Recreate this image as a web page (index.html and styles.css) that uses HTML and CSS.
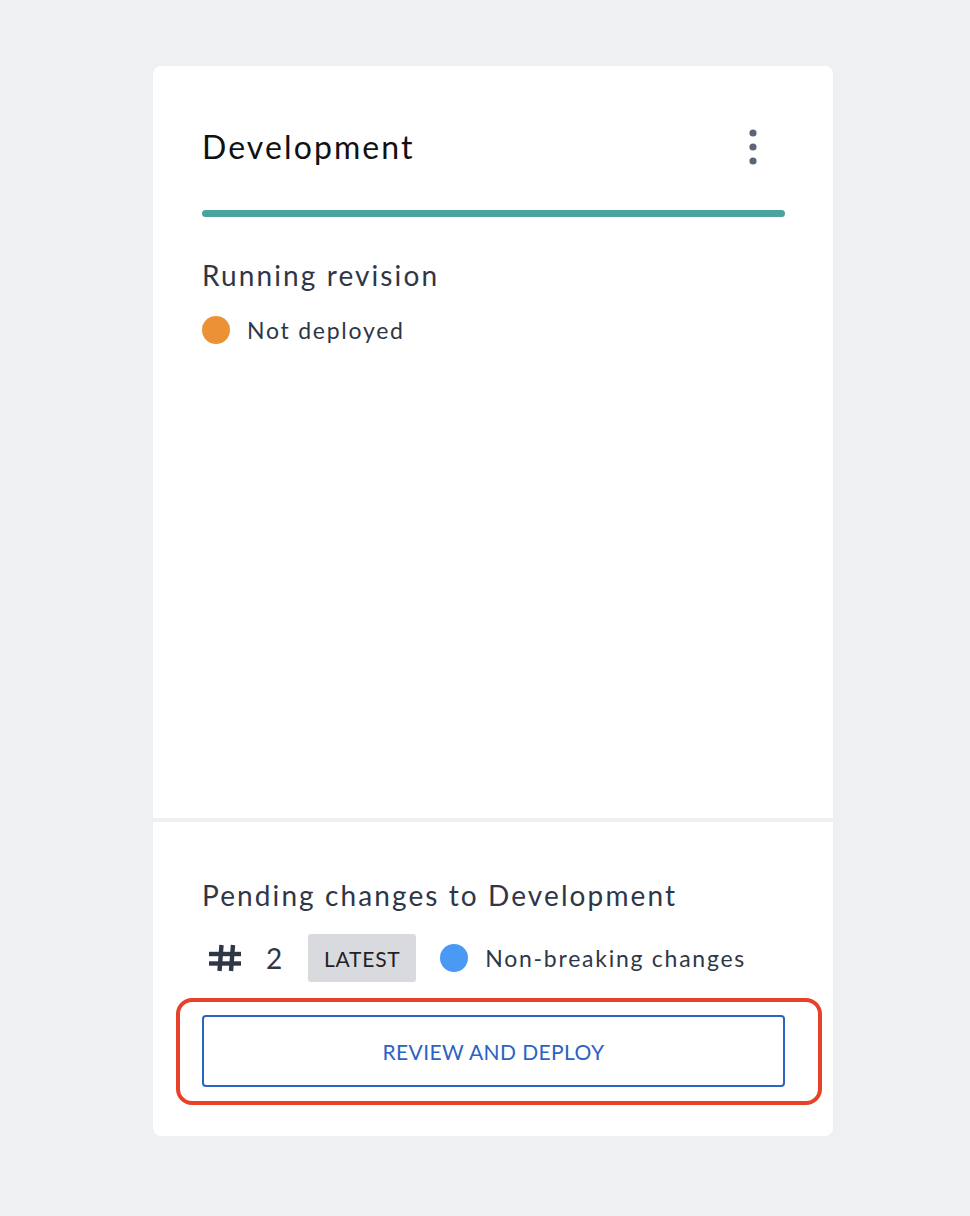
FILE: index.html
```html
<!DOCTYPE html>
<html>
<head>
<meta charset="utf-8">
<link rel="stylesheet" href="styles.css">
</head>
<body>
<div class="card">
  <section class="panel panel-top">
    <div class="title-row">
      <h1 class="title">Development</h1>
      <button class="kebab" aria-label="More">
        <svg width="8" height="36" viewBox="0 0 8 36"><circle cx="4" cy="4" r="3.6" fill="#5b6479"/><circle cx="4" cy="18" r="3.6" fill="#5b6479"/><circle cx="4" cy="32" r="3.6" fill="#5b6479"/></svg>
      </button>
    </div>
    <div class="bar"></div>
    <h2 class="section-title">Running revision</h2>
    <div class="status">
      <span class="dot dot-orange"></span>
      <span class="status-text">Not deployed</span>
    </div>
  </section>
  <section class="panel panel-bottom">
    <h2 class="section-title">Pending changes to Development</h2>
    <div class="rev-row">
      <svg class="hash" width="34" height="28" viewBox="0 0 34 28" aria-label="Revision">
        <g stroke="#2f3747" stroke-width="4.4" fill="none">
          <line x1="1" y1="10" x2="33" y2="10"/>
          <line x1="1" y1="19.5" x2="33" y2="19.5"/>
          <line x1="13.5" y1="1" x2="11.5" y2="27"/>
          <line x1="25" y1="1" x2="23" y2="27"/>
        </g>
      </svg>
      <span class="rev-num">2</span>
      <span class="badge">LATEST</span>
      <span class="dot dot-blue"></span>
      <span class="status-text">Non-breaking changes</span>
    </div>
    <div class="btn-wrap">
      <button class="btn">REVIEW AND DEPLOY</button>
      <div class="highlight"></div>
    </div>
  </section>
</div>
</body>
</html>
```

FILE: styles.css
```css
* { box-sizing: border-box; }
html, body { margin: 0; padding: 0; }
body {
  background: #eff0f2;
  font-family: Lato, "Liberation Sans", sans-serif;
  width: 970px;
  height: 1216px;
}
.card {
  margin: 66px 0 0 153px;
  width: 680px;
  display: flex;
  flex-direction: column;
  gap: 4px;
}
.panel {
  background: #fff;
  padding: 0 48px 0 49px;
}
.panel-top {
  border-radius: 8px 8px 0 0;
  height: 752px;
  padding-top: 61px;
}
.panel-bottom {
  border-radius: 0 0 8px 8px;
  height: 314px;
  padding-top: 55px;
}
.title-row {
  display: flex;
  align-items: center;
  justify-content: space-between;
  height: 40px;
}
.title {
  margin: 0;
  font-size: 32px;
  line-height: 40px;
  font-weight: 400;
  letter-spacing: 2.1px;
  color: #111;
}
.kebab {
  border: 0;
  background: none;
  padding: 0;
  margin-right: 28px;
  display: flex;
  height: 36px;
}
.bar {
  margin-top: 43px;
  height: 7px;
  border-radius: 4px;
  background: #4ba39e;
}
.section-title {
  margin: 40px 0 0;
  font-size: 28px;
  line-height: 36px;
  font-weight: 400;
  letter-spacing: 2.1px;
  color: #2f3747;
}
.panel-bottom .section-title { margin-top: 0; }
.status {
  margin-top: 23px;
  display: flex;
  align-items: center;
  height: 28px;
}
.dot {
  width: 28px;
  height: 28px;
  border-radius: 50%;
  flex: none;
}
.dot-orange { background: #ea9235; }
.dot-blue { background: #4a99f5; }
.status-text {
  margin-left: 17px;
  font-size: 23px;
  letter-spacing: 1.75px;
  color: #2f3747;
}
.rev-row {
  margin-top: 21px;
  display: flex;
  align-items: center;
  height: 48px;
}
.hash {
  margin-left: 6px;
  flex: none;
}
.rev-num {
  margin-left: 24px;
  font-size: 28px;
  color: #2f3747;
}
.badge {
  margin-left: 26px;
  height: 48px;
  width: 108px;
  background: #d9dadd;
  border-radius: 3px;
  display: flex;
  align-items: center;
  justify-content: center;
  font-size: 21px;
  letter-spacing: 0.8px;
  color: #1f2329;
}
.dot-blue { margin-left: 24px; }
.btn-wrap {
  position: relative;
  margin-top: 33px;
}
.btn {
  display: block;
  width: 100%;
  height: 72px;
  border: 2px solid #2a63c4;
  border-radius: 4px;
  background: #fff;
  color: #2a63c4;
  font-family: Lato, "Liberation Sans", sans-serif;
  font-size: 21px;
  letter-spacing: 0.4px;
}
.highlight {
  position: absolute;
  left: -26px;
  top: -17px;
  right: -37px;
  bottom: -18px;
  border: 4px solid #e8412a;
  border-radius: 16px;
  pointer-events: none;
}
```
